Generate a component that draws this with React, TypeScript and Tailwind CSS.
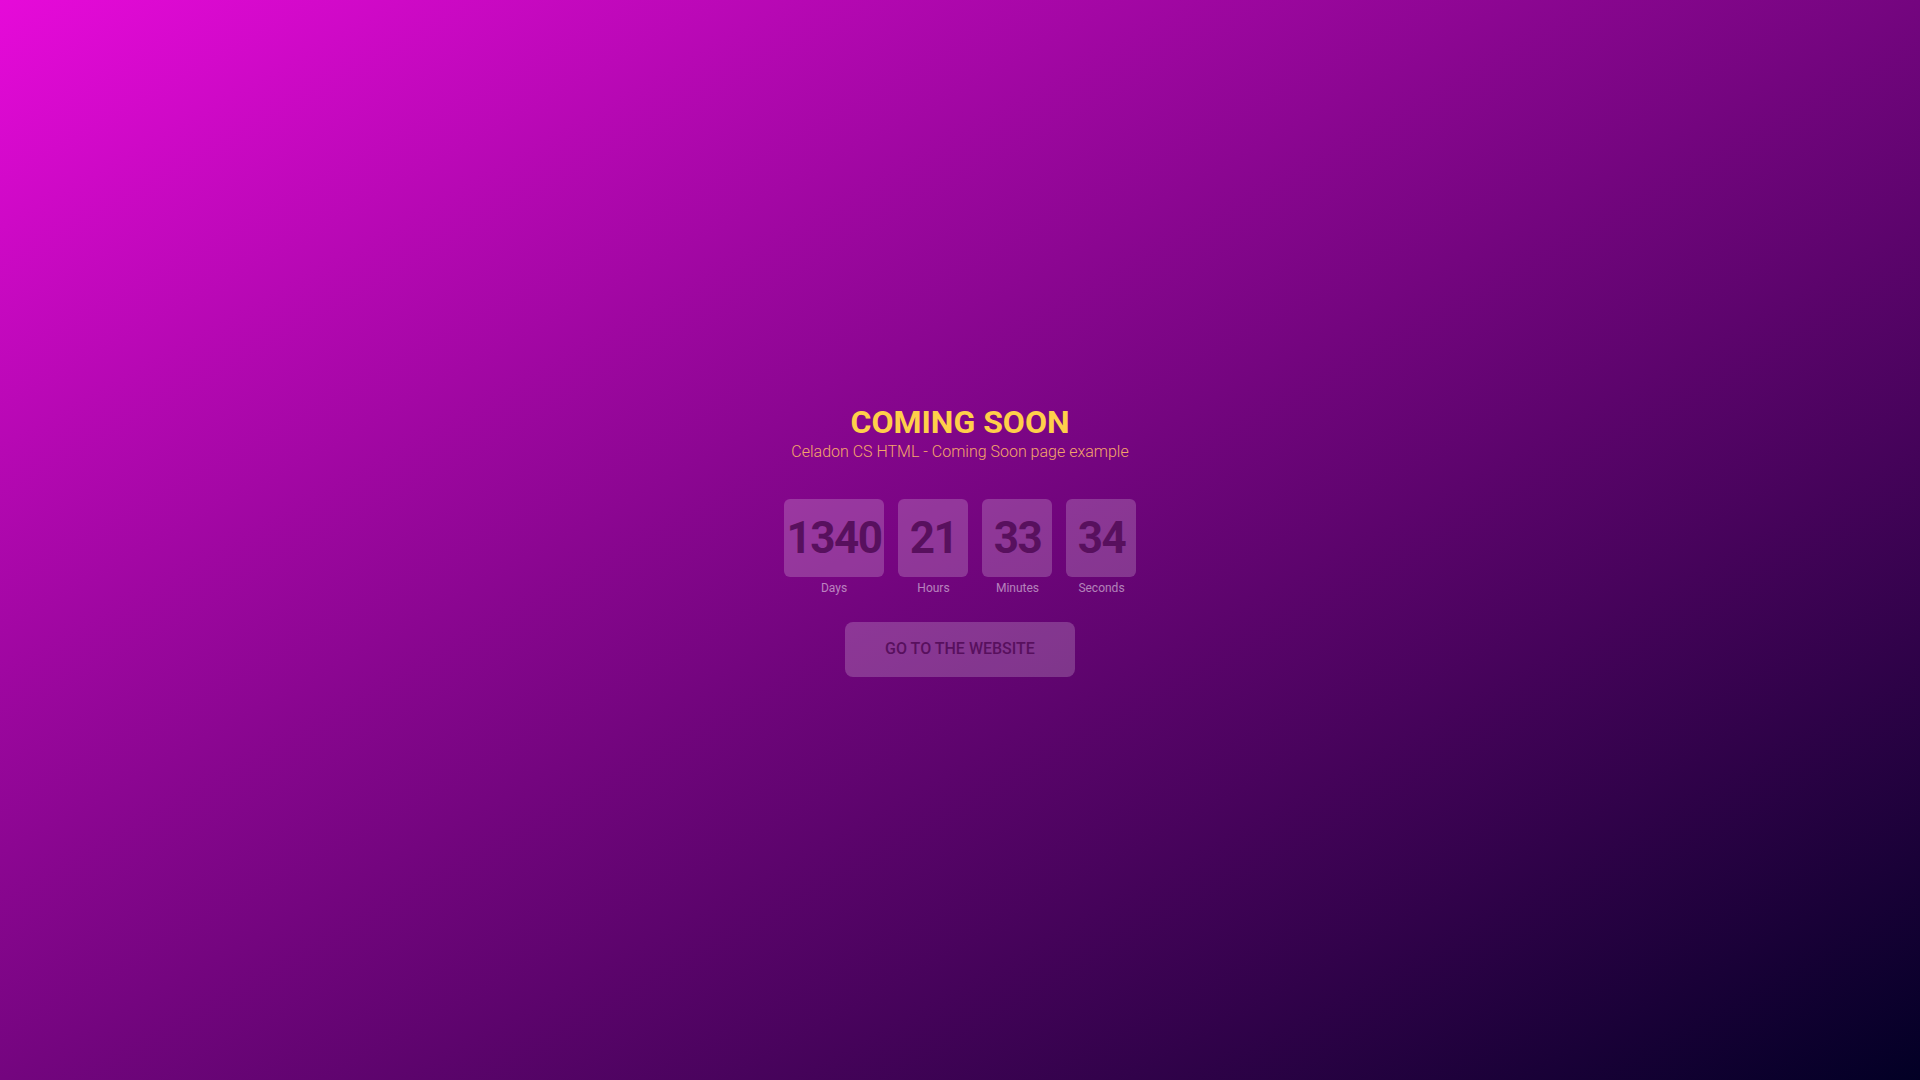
import React from 'react';

const countdown = [
  { value: '1340', label: 'Days' },
  { value: '21', label: 'Hours' },
  { value: '33', label: 'Minutes' },
  { value: '34', label: 'Seconds' },
];

export default function App() {
  return (
    <div className="min-h-screen w-full flex flex-col items-center justify-center bg-[linear-gradient(to_bottom_right,#e60ad9,#74057f,#020025)] font-['Roboto',sans-serif]">
      <h1 className="text-[32px] leading-[36px] font-bold text-[#ffcf4a]">COMING SOON</h1>
      <p className="text-[16px] leading-[24px] font-light text-[#f5a66a]">Celadon CS HTML - Coming Soon page example</p>

      <div className="mt-[35px] flex items-start gap-[14px]">
        {countdown.map((item) => (
          <div key={item.label} className="flex flex-col items-center">
            <div className="h-[78px] min-w-[70px] px-[3px] rounded-[6px] bg-white/20 flex items-center justify-center">
              <span className="text-[44px] font-bold text-[#58105e] tracking-[-1.5px]">{item.value}</span>
            </div>
            <span className="mt-[3px] text-[12px] leading-[16px] text-white/50">{item.label}</span>
          </div>
        ))}
      </div>

      <button className="mt-[26px] w-[230px] h-[55px] rounded-[8px] bg-white/20 text-[16px] font-medium text-[#58105e] uppercase">
        Go to the website
      </button>
    </div>
  );
}
